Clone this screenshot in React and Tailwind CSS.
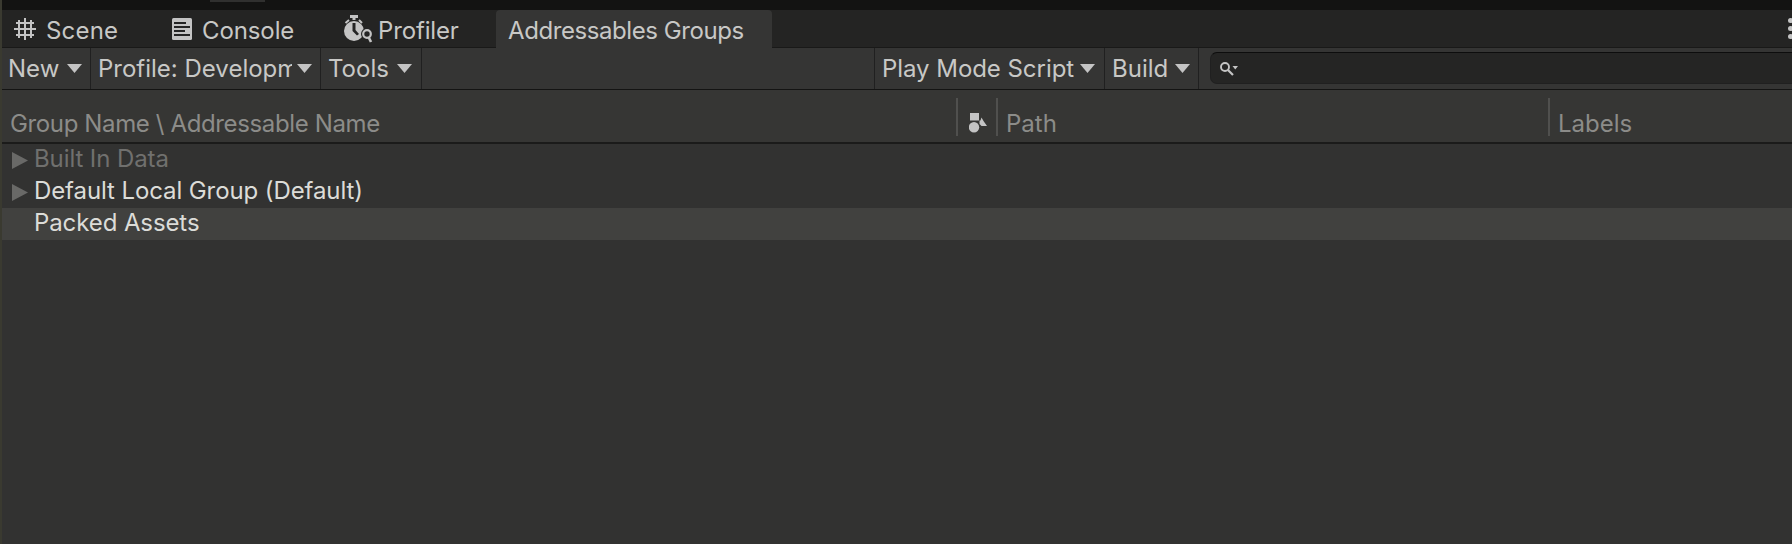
import React from "react";

const FONT = "font-['Inter','Liberation_Sans',sans-serif]";

function Caret({ className = "" }) {
  return (
    <svg className={`shrink-0 ${className}`} width="15" height="9" viewBox="0 0 15 9" fill="#c4c4c4">
      <path d="M0 0H15L7.5 9Z" />
    </svg>
  );
}

function SceneIcon() {
  return (
    <svg className="shrink-0" width="22" height="22" viewBox="0 0 22 22" fill="none" stroke="#c4c4c4" strokeWidth="2">
      <path d="M5 2V20M11 0V22M17 2V20M2 5H20M0 11H22M2 17H20" />
    </svg>
  );
}

function ConsoleIcon() {
  return (
    <svg className="shrink-0" width="20" height="22" viewBox="0 0 20 22">
      <rect width="20" height="22" rx="1.5" fill="#c4c4c4" />
      <path d="M2 5H14M2 9H18M2 13H13M2 17H18" stroke="#242424" strokeWidth="1.8" />
    </svg>
  );
}

function ProfilerIcon() {
  return (
    <svg className="shrink-0" width="29" height="28" viewBox="0 0 29 28" fill="none">
      <path d="M6 0H14V3H11.5V5H8.500V3H6Z" fill="#c4c4c4" />
      <path d="M1.500 8L5 5M15 5L18 8" stroke="#c4c4c4" strokeWidth="2" />
      <circle cx="10" cy="16" r="10" fill="#c4c4c4" />
      <path d="M8.500 8H11.500V15L15 19L13 20.500L8.500 16Z" fill="#242424" />
      <circle cx="23" cy="19" r="6" fill="#242424" />
      <circle cx="23" cy="19" r="3.800" stroke="#c4c4c4" strokeWidth="2.200" />
      <path d="M24.500 22L27 27" stroke="#c4c4c4" strokeWidth="2.600" />
    </svg>
  );
}

function SearchIcon() {
  return (
    <svg className="shrink-0" width="18" height="14" viewBox="0 0 18 14" fill="none">
      <circle cx="5" cy="5" r="4" stroke="#c4c4c4" strokeWidth="1.900" />
      <path d="M8 8L13 13" stroke="#c4c4c4" strokeWidth="2.200" />
      <path d="M12.500 4H18L15.250 7.500Z" fill="#c4c4c4" />
    </svg>
  );
}

function AssetTypeIcon() {
  return (
    <svg className="shrink-0" width="18" height="20" viewBox="0 0 18 20" fill="#c4c4c4">
      <rect x="1" y="0" width="9" height="7.500" />
      <circle cx="5" cy="14.200" r="5.200" />
      <path d="M10.500 7.500H11.500L12.500 4.500L14.500 8L18 13H12.500L10.500 11Z" />
    </svg>
  );
}

function Foldout() {
  return (
    <svg className="shrink-0" width="16" height="17" viewBox="0 0 16 17" fill="#696967">
      <path d="M0 0L16 8.500L0 17Z" />
    </svg>
  );
}

function Row({ label, foldout, tone, selected }) {
  return (
    <div className={`flex h-8 shrink-0 items-center pl-[10px] ${selected ? "bg-[#41413f]" : ""}`}>
      <div className="flex w-[22px] shrink-0">{foldout && <Foldout />}</div>
      <span className={`-mt-[2px] tracking-[-0.1px] ${tone}`}>{label}</span>
    </div>
  );
}

export default function App() {
  return (
    <div className={`flex h-[544px] w-[1792px] overflow-hidden whitespace-nowrap bg-[#323231] text-[24px] leading-[30px] text-[#c8c8c6] ${FONT}`}>
      <div className="w-[2px] shrink-0 bg-[#3a3a30]" />
      <div className="flex min-w-0 flex-1 flex-col">
        <div className="flex h-[10px] shrink-0 bg-[#131312] pl-[208px]">
          <div className="h-[2px] w-[55px] bg-[#30302f]" />
        </div>

        <div className="flex h-[38px] shrink-0 bg-[#242423]">
          <div className="flex w-[494px] shrink-0 border-b border-[#191918]">
            <div className="flex w-[156px] items-center gap-[10px] pl-[12px]">
              <SceneIcon />
              <span className="mt-[5px] tracking-[0.2px]">Scene</span>
            </div>
            <div className="flex w-[184px] items-center gap-[10px] pl-[14px]">
              <ConsoleIcon />
              <span className="mt-[5px] tracking-[-0.1px]">Console</span>
            </div>
            <div className="flex items-center gap-[5px] pl-[2px]">
              <ProfilerIcon />
              <span className="mt-[5px] tracking-[-0.15px]">Profiler</span>
            </div>
          </div>
          <div className="flex w-[276px] shrink-0 items-center rounded-t-[4px] bg-[#353534] pl-[12px]">
            <span className="mt-[4px] tracking-[-0.42px]">Addressables Groups</span>
          </div>
          <div className="flex flex-1 justify-end overflow-hidden border-b border-[#191918]">
            <div className="-mr-[1px] flex flex-col gap-[3px] pt-[8px]">
              <div className="size-[5px] rounded-full bg-[#c4c4c4]" />
              <div className="size-[5px] rounded-full bg-[#c4c4c4]" />
              <div className="size-[5px] rounded-full bg-[#c4c4c4]" />
            </div>
          </div>
        </div>

        <div className="flex h-[42px] shrink-0 border-b border-[#141413] bg-[#353534]">
          <div className="flex w-[89px] shrink-0 items-center justify-between border-r border-[#202020] pl-[6px] pr-[8px]">
            <span>New</span>
            <Caret />
          </div>
          <div className="flex w-[230px] shrink-0 items-center border-r border-[#202020] pl-[7px] pr-[8px]">
            <span className="w-[194px] overflow-hidden">Profile: Developm</span>
            <Caret className="ml-[5px]" />
          </div>
          <div className="flex w-[101px] shrink-0 items-center justify-between border-r border-[#202020] pl-[7px] pr-[9px]">
            <span>Tools</span>
            <Caret />
          </div>
          <div className="w-[453px] shrink-0 border-r border-[#202020]" />
          <div className="flex w-[230px] shrink-0 items-center justify-between border-r border-[#202020] pl-[7px] pr-[9px]">
            <span className="tracking-[-0.05px]">Play Mode Script</span>
            <Caret />
          </div>
          <div className="flex w-[94px] shrink-0 items-center justify-between border-r border-[#202020] pl-[7px] pr-[8px]">
            <span>Build</span>
            <Caret />
          </div>
          <div className="flex flex-1 pb-[5px] pl-[11px] pt-[4px]">
            <div className="flex flex-1 items-center rounded-l-[7px] border-y border-l border-b-[#202020] border-l-[#202020] border-t-[#0d0d0d] bg-[#252524] pl-[9px] pt-[2px]">
              <SearchIcon />
            </div>
          </div>
        </div>

        <div className="flex h-[54px] shrink-0 border-b-2 border-[#1b1b1a] bg-[#363634] pt-[8px] text-[#8c8c89]">
          <div className="flex h-[38px] w-[956px] shrink-0 items-end border-r-2 border-[#50504e] pl-[8px]">
            <span className="-mb-[3px] tracking-[-0.37px]">Group Name \ Addressable Name</span>
          </div>
          <div className="flex h-[38px] w-[40px] shrink-0 items-end border-r-2 border-[#50504e] pb-[3px] pl-[11px]">
            <AssetTypeIcon />
          </div>
          <div className="flex h-[38px] w-[552px] shrink-0 items-end border-r-2 border-[#50504e] pl-[8px]">
            <span className="-mb-[3px]">Path</span>
          </div>
          <div className="flex h-[38px] items-end pl-[8px]">
            <span className="-mb-[3px]">Labels</span>
          </div>
        </div>

        <div className="flex flex-1 flex-col">
          <Row label="Built In Data" foldout tone="text-[#70706e]" />
          <Row label="Default Local Group (Default)" foldout tone="text-[#dcdcd8]" />
          <Row label="Packed Assets" selected tone="text-[#dcdcd8]" />
        </div>
      </div>
    </div>
  );
}
